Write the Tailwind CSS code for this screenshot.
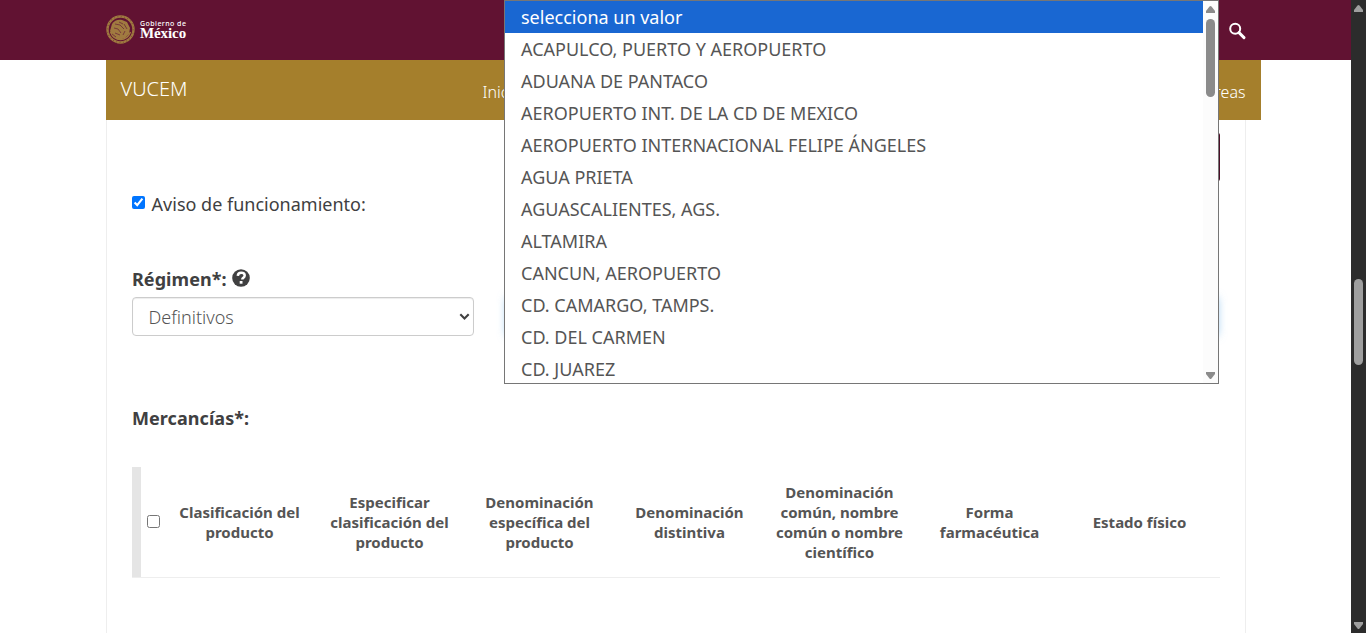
<!DOCTYPE html>
<html lang="es">
<head>
<meta charset="utf-8">
<title>VUCEM</title>
<script src="https://cdn.jsdelivr.net/npm/@tailwindcss/browser@4"></script>
</head>
<body class="relative flex h-[633px] w-[1366px] overflow-hidden bg-white font-['Noto_Sans',sans-serif] text-[18px] text-[#404041]">
<div class="flex h-full w-[1351px] flex-col">
  <header class="flex h-[60px] shrink-0 items-center justify-between bg-[#611232] pl-[106px] pr-[105px]">
    <div class="flex h-[30px] items-start gap-[5px]">
      <svg class="size-[29px]" viewBox="0 0 29 29" fill="none">
        <circle cx="14.5" cy="14.5" r="13" stroke="#a07a40" stroke-width="2.4"/>
        <circle cx="14.5" cy="14.5" r="13" stroke="#7d4a38" stroke-width="1.2" stroke-dasharray=".8 2.6"/>
        <path d="M6 9c2-4 7-5 10-4l5 2 3 6-1 6-4 4-6 2-6-3-3-6z" fill="#a07a40"/>
        <path d="M4.5 17c2 5 6 7.500 10 7.500s8-2.500 10-7.500" stroke="#a07a40" stroke-width="1.500"/>
        <path d="M9 9l5 1 4 4M8 13l4 1 3 4M18 9l3 5M9 18l5 2M13 7l4 2M19 16l-2 4M6 19l4 3" stroke="#73333a" stroke-width=".9"/>
      </svg>
      <div class="flex flex-col pt-[5px] text-white">
        <span class="h-[7px] text-[7px] font-medium leading-[7px] tracking-[.45px]">Gobierno de</span>
        <span class="h-[13px] font-['Liberation_Serif',serif] text-[15px] font-bold leading-[12px] tracking-[-.1px]">México</span>
      </div>
    </div>
    <svg class="mt-[2px] h-[18px] w-[17px]" viewBox="0 0 17 18" fill="none" stroke="#fff"><circle cx="6.2" cy="6.8" r="5" stroke-width="2"/><path d="M10 10.6l5 5" stroke-width="2.9" stroke-linecap="round"/></svg>
  </header>
  <nav class="ml-[106px] flex h-[60px] w-[1155px] shrink-0 justify-between bg-[#a57f2c] pl-[14.5px] pr-[15.5px] text-white">
    <div class="flex gap-[295px]">
      <span class="pt-[15px] text-[20px] font-light leading-[28px]">VUCEM</span>
      <span class="pt-[20px] text-[16px] font-light leading-[24px]">Inicio</span>
    </div>
    <span class="pt-[20px] text-[16px] font-light leading-[24px]">Tareas</span>
  </nav>
  <main class="ml-[106px] flex w-[1140px] grow flex-col border-x border-[#eee] px-[25px]">
    <div class="ml-auto mt-[13px] h-[48px] w-[120px] rounded-[2px] bg-[#4a0e27]"></div>
    <label class="mt-[10px] flex h-[27px] gap-[6.6px] leading-[27px]"><input type="checkbox" checked class="m-0 mt-[5px] size-[13px]">Aviso de funcionamiento:</label>
    <div class="mt-[48px] flex h-[27px] gap-[5.5px] font-bold leading-[27px]">
      <span class="tracking-[.06px]">Régimen*:</span>
      <svg class="mt-[3px] size-[18px]" viewBox="0 0 18 18"><circle cx="9" cy="9" r="8.8" fill="#404041"/><path d="M5.8 6.8C6 4.7 7.3 3.8 9.2 3.8c2.1 0 3.5 1 3.5 2.7 0 1.3-.8 2-1.7 2.6-.6.4-.7.6-.7 1.3" fill="none" stroke="#fff" stroke-width="2.5"/><path d="M7.700 12h2.800v2.700H7.700z" fill="#fff"/></svg>
    </div>
    <div class="mt-[4px] flex h-[39px] gap-[32px]">
      <div class="flex w-[342px] items-center justify-between rounded-[4px] border border-[#ccc] pl-[15.5px] pr-[3px] font-light text-[#555] shadow-[inset_0_1px_1px_rgba(0,0,0,.075)]">
        <span class="pt-[2px]">Definitivos</span>
        <svg class="h-[8px] w-[11px]" viewBox="0 0 11 8" fill="none" stroke="#404040" stroke-width="2.1"><path d="M1.3 1.2l4.2 4.2 4.2-4.2"/></svg>
      </div>
      <div class="w-[712px] shrink-0 rounded-[4px] border border-[#66afe9] shadow-[0_0_8px_rgba(102,175,233,.6)]"></div>
    </div>
    <h2 class="mt-[69px] h-[27px] font-bold leading-[27px] tracking-[.06px]">Mercancías*:</h2>
    <div class="mt-[35px] flex h-[111px] w-[1088px] items-center border-b border-[#eee] text-center text-[15px] font-bold leading-[20px] text-[#555]">
      <div class="h-full w-[9px] bg-[#e5e5e5]"></div>
      <div class="flex w-[23.5px] justify-end pb-[2px] pr-[4.5px]"><input type="checkbox" class="m-0 size-[13px]"></div>
      <div class="w-[150px]">Clasificación del<br>producto</div>
      <div class="w-[150px]">Especificar<br>clasificación del<br>producto</div>
      <div class="w-[150px]">Denominación<br>específica del<br>producto</div>
      <div class="w-[150px]">Denominación<br>distintiva</div>
      <div class="w-[150px]">Denominación<br>común, nombre<br>común o nombre<br>científico</div>
      <div class="w-[150px]">Forma<br>farmacéutica</div>
      <div class="w-[150px]">Estado físico</div>
    </div>
  </main>
</div>
<aside class="flex h-full w-[15px] flex-col items-center bg-[#2c2c2c]">
  <svg class="mt-[5px] h-[7px] w-[9px]" viewBox="0 0 9 7" fill="#9f9f9f"><path d="M3.5.6q1-1 2 0L9 5v2H0V5z"/></svg>
  <div class="mt-[267px] h-[86px] w-[9px] rounded-full bg-[#9f9f9f]"></div>
  <svg class="mb-[4px] mt-auto h-[7px] w-[9px]" viewBox="0 0 9 7" fill="#9f9f9f"><path d="M3.5 6.4q1 1 2 0L9 2V0H0v2z"/></svg>
</aside>
<div class="absolute left-[504px] top-0 flex h-[384px] w-[715px] border border-[#767676] bg-white text-[#555]">
  <ul class="w-[698px] overflow-hidden leading-[32px]">
    <li class="h-[32px] bg-[#1967d2] pl-[16px] text-white">selecciona un valor</li>
    <li class="h-[32px] pl-[16px]">ACAPULCO, PUERTO Y AEROPUERTO</li>
    <li class="h-[32px] pl-[16px]">ADUANA DE PANTACO</li>
    <li class="h-[32px] pl-[16px]">AEROPUERTO INT. DE LA CD DE MEXICO</li>
    <li class="h-[32px] pl-[16px]">AEROPUERTO INTERNACIONAL FELIPE ÁNGELES</li>
    <li class="h-[32px] pl-[16px]">AGUA PRIETA</li>
    <li class="h-[32px] pl-[16px]">AGUASCALIENTES, AGS.</li>
    <li class="h-[32px] pl-[16px]">ALTAMIRA</li>
    <li class="h-[32px] pl-[16px]">CANCUN, AEROPUERTO</li>
    <li class="h-[32px] pl-[16px]">CD. CAMARGO, TAMPS.</li>
    <li class="h-[32px] pl-[16px]">CD. DEL CARMEN</li>
    <li class="h-[32px] pl-[16px]">CD. JUAREZ</li>
  </ul>
  <div class="flex w-[15px] flex-col items-center bg-[#fcfcfc]">
    <svg class="mt-[5px] h-[7px] w-[9px]" viewBox="0 0 9 7" fill="#8b8b8b"><path d="M3.5.6q1-1 2 0L9 5v2H0V5z"/></svg>
    <div class="mt-[6px] h-[78px] w-[9px] rounded-full bg-[#8b8b8b]"></div>
    <svg class="mb-[4px] mt-auto h-[7px] w-[9px]" viewBox="0 0 9 7" fill="#8b8b8b"><path d="M3.5 6.4q1 1 2 0L9 2V0H0v2z"/></svg>
  </div>
</div>
</body>
</html>
